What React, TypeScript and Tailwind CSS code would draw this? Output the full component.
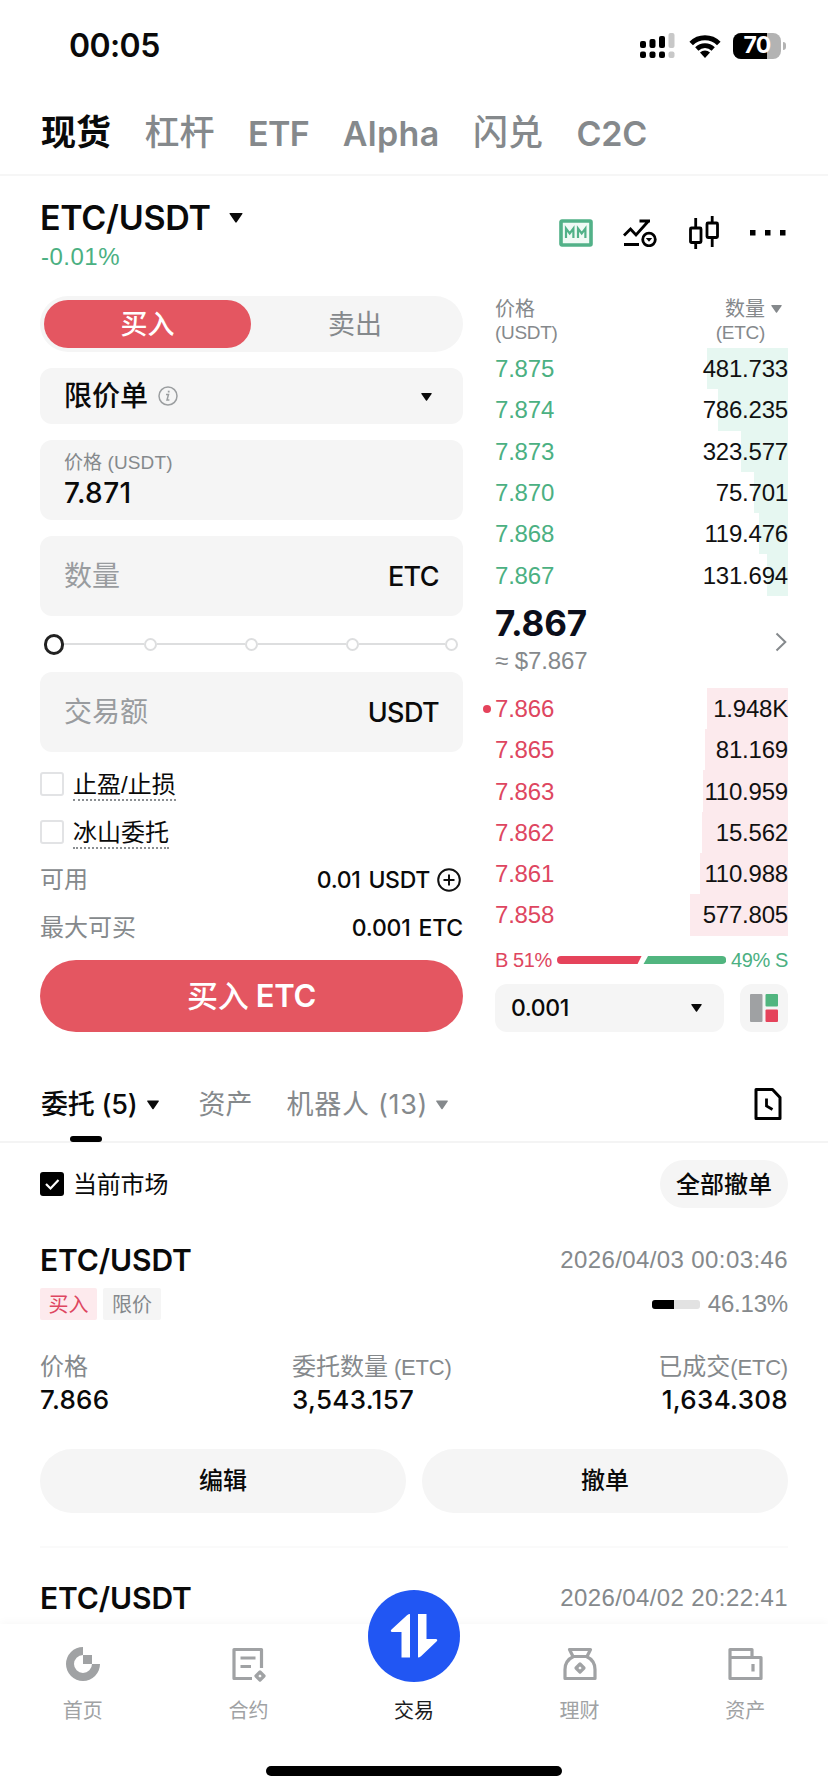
import { type ReactNode } from "react"
import clsx from "clsx"

type Row = { price: string; amount: string; width: number; mine?: boolean }

const topTabs = [
    { label: "现货", active: true },
    { label: "杠杆" },
    { label: "ETF", latin: "tracking-[-0.6px]" },
    { label: "Alpha", latin: "tracking-[0.3px]" },
    { label: "闪兑" },
    { label: "C2C", latin: "tracking-[-0.2px]" },
]

const upper: Row[] = [
    { price: "7.875", amount: "481.733", width: 81 },
    { price: "7.874", amount: "786.235", width: 70 },
    { price: "7.873", amount: "323.577", width: 47 },
    { price: "7.870", amount: "75.701", width: 34 },
    { price: "7.868", amount: "119.476", width: 29 },
    { price: "7.867", amount: "131.694", width: 21 },
]

const lower: Row[] = [
    { price: "7.866", amount: "1.948K", width: 81, mine: true },
    { price: "7.865", amount: "81.169", width: 83 },
    { price: "7.863", amount: "110.959", width: 85 },
    { price: "7.862", amount: "15.562", width: 86 },
    { price: "7.861", amount: "110.988", width: 88 },
    { price: "7.858", amount: "577.805", width: 98 },
]

const sans = "font-['Liberation_Sans','Noto_Sans_CJK_SC',sans-serif]"
const inter = "font-['Inter','Noto_Sans_CJK_SC',sans-serif]"

const Caret = ({ className }: { className?: string }) => (
    <svg viewBox="0 0 12 9" className={clsx("shrink-0 fill-current", className)}>
        <path d="M0.6 0h10.8q0.8 0.3 0.3 1L6.6 8.4q-0.6 0.7-1.2 0L0.3 1Q-0.2 0.3 0.6 0z" />
    </svg>
)

/* Status bar */
const StatusBar = () => (
    <div className="flex h-[88px] shrink-0 items-center justify-between pl-[69px] pr-[42px] pt-[3px]">
        <span className={clsx(inter, "text-[32px] font-semibold tracking-[-0.6px]")}>00:05</span>
        <div className="flex items-center">
            <svg viewBox="0 0 36 26" className="h-[26px] w-9">
                <g fill="#000">
                    <rect x="0" y="8" width="6" height="7" rx="2" />
                    <rect x="9.5" y="6" width="6" height="9" rx="2" />
                    <rect x="19" y="3" width="6" height="12" rx="2" />
                    <rect x="0" y="18.500" width="6" height="6.500" rx="2" />
                    <rect x="9.5" y="18.500" width="6" height="6.500" rx="2" />
                    <rect x="19" y="18.500" width="6" height="6.500" rx="2" />
                </g>
                <g fill="#c8c8c8">
                    <rect x="28.500" y="0" width="6" height="15" rx="2" />
                    <rect x="28.500" y="18.500" width="6" height="6.500" rx="2" />
                </g>
            </svg>
            <svg viewBox="0 0 32 24" className="ml-[13px] h-6 w-8">
                <path d="M2.200 9.500a19.500 19.500 0 0 1 27.600 0" fill="none" stroke="#000" strokeWidth="5" />
                <path d="M7.800 15a11.600 11.600 0 0 1 16.400 0" fill="none" stroke="#000" strokeWidth="4.600" />
                <path d="M11 18.600a7.200 7.200 0 0 1 10 0L16 24z" fill="#000" />
            </svg>
            <div className="relative ml-[12px] h-[26px] w-12 overflow-hidden rounded-[8px] bg-[#b3b3b3]">
                <div className="h-full w-[34px] bg-black" />
                <span className={clsx(inter, "absolute inset-0 flex items-center justify-center text-[23px] font-bold tracking-[-0.8px] text-white")}>70</span>
            </div>
            <div className="ml-[2px] h-2 w-[3px] rounded-r-full bg-[#b3b3b3]" />
        </div>
    </div>
)

const BookRow = ({ row, buy }: { row: Row; buy?: boolean }) => (
    <div className={clsx(sans, "relative flex h-[41.3px] items-center justify-between pt-px text-[24px]")}>
        <div className={clsx("absolute right-0 top-0 h-full", buy ? "bg-[#fceaed]" : "bg-[#e6f7f1]")} style={{ width: row.width }} />
        {row.mine && <i className="absolute -left-[12px] top-[17px] size-2 rounded-full bg-[#e5435b]" />}
        <span className={clsx("relative tracking-[-0.2px]", buy ? "text-[#de4660]" : "text-[#4bb082]")}>{row.price}</span>
        <span className="relative tracking-[-0.2px] text-[#111]">{row.amount}</span>
    </div>
)

const Field = ({ label, unit }: { label: string; unit: string }) => (
    <div className="flex h-20 items-center justify-between rounded-[12px] bg-[#f5f5f5] px-6 pt-[2px]">
        <span className="text-[28px] text-[#999c9f]">{label}</span>
        <span className={clsx(inter, "text-[27px] font-medium tracking-[-0.6px]")}>{unit}</span>
    </div>
)

const CheckLine = ({ label }: { label: string }) => (
    <div className="flex h-12 items-center gap-[9px]">
        <span className="size-6 rounded-[3px] border-2 border-[#e2e3e5]" />
        <span className="mt-1 border-b-2 border-dotted border-[#8b8f92] text-[24px] leading-[28px]">{label}</span>
    </div>
)

const OrderForm = () => (
    <div className="w-[423px]">
        <div className="flex h-14 rounded-full bg-[#f5f5f5] p-1 text-[27px]">
            <div className="flex w-[207px] items-center justify-center rounded-full bg-[#e45661] pt-[2px] font-medium text-white">买入</div>
            <div className="flex flex-1 items-center justify-center pt-[2px] text-[#85898c]">卖出</div>
        </div>

        <div className="mt-4 flex h-14 items-center rounded-[12px] bg-[#f5f5f5] px-6">
            <span className="pt-[2px] text-[28px] font-medium">限价单</span>
            <svg viewBox="0 0 20 20" className="ml-[10px] size-5" fill="none" stroke="#9b9ea0" strokeWidth="1.5">
                <circle cx="10" cy="10" r="9" />
                <path d="M8 8.500h2.500L9 14h2.400" />
                <path d="M10.700 4.700v1.800" strokeWidth="1.800" />
            </svg>
            <Caret className="ml-auto mr-[7px] mt-[2px] h-[8px] w-[11px]" />
        </div>

        <div className="mt-4 flex h-20 flex-col justify-center rounded-[12px] bg-[#f5f5f5] px-6">
            <span className="text-[19px] leading-[26px] tracking-[0.1px] text-[#85898c]">价格 (USDT)</span>
            <span className={clsx(inter, "text-[28px] font-medium leading-[35px] tracking-[0.4px]")}>7.871</span>
        </div>

        <div className="mt-4">
            <Field label="数量" unit="ETC" />
        </div>

        {/* Amount slider */}
        <div className="flex h-14 items-center pl-1 pr-[5px]">
            <span className="size-[21px] rounded-full border-[3px] border-[#222]" />
            {[80, 88, 88, 86].map((w, i) => (
                <div key={i} className="flex items-center">
                    <span className="h-[2px] bg-[#dddedf]" style={{ width: w }} />
                    <span className="size-[13px] rounded-full border-2 border-[#dddedf] bg-white" />
                </div>
            ))}
        </div>

        <Field label="交易额" unit="USDT" />

        <div className="mt-2">
            <CheckLine label="止盈/止损" />
            <CheckLine label="冰山委托" />
            <div className="flex h-12 items-center justify-between text-[24px]">
                <span className="text-[#85898c]">可用</span>
                <span className={clsx(inter, "flex items-center gap-[7px] text-[23px] font-medium tracking-[-0.3px] [word-spacing:2px]")}>
                    0.01 USDT
                    <svg viewBox="0 0 24 24" className="mr-[2px] size-6" fill="none" stroke="#111" strokeWidth="2">
                        <circle cx="12" cy="12" r="10.800" />
                        <path d="M12 6.500v11M6.500 12h11" />
                    </svg>
                </span>
            </div>
            <div className="flex h-12 items-center justify-between text-[24px]">
                <span className="text-[#85898c]">最大可买</span>
                <span className={clsx(inter, "text-[23px] font-medium tracking-[-0.2px] [word-spacing:2px]")}>0.001 ETC</span>
            </div>
        </div>

        <div className={clsx(inter, "mt-2 flex h-[72px] items-center justify-center rounded-full bg-[#e45661] pt-px text-[31px] font-semibold tracking-[-0.3px] text-white")}>
            <span className="font-medium">买入</span>&nbsp;ETC
        </div>
    </div>
)

const OrderBook = () => (
    <div className="w-[293px]">
        <div className="flex h-[52px] justify-between pt-px text-[20px] leading-6 text-[#85898c]">
            <div>
                <p>价格</p>
                <p className="text-[19px] tracking-[-0.3px]">(USDT)</p>
            </div>
            <div className="flex gap-[6px]">
                <div className="text-right">
                    <p>数量</p>
                    <p className="text-[19px] tracking-[-0.3px]">(ETC)</p>
                </div>
                <Caret className="mr-[6px] mt-[8px] h-[8px] w-[11px]" />
            </div>
        </div>

        {upper.map((row) => <BookRow key={row.price} row={row} />)}

        <div className="flex h-[92px] items-center justify-between">
            <div className="pb-[2px]">
                <p className={clsx(inter, "text-[35px] font-bold leading-[36px] tracking-[-0.1px] text-[#0b0e1a]")}>7.867</p>
                <p className={clsx(sans, "mt-[4px] text-[24px] leading-[32px] tracking-[-0.1px] text-[#85898c]")}>≈ $7.867</p>
            </div>
            <svg viewBox="0 0 12 20" className="mr-[1px] h-5 w-3" fill="none" stroke="#85898c" strokeWidth="2">
                <path d="M1.500 1.500L10.300 10l-8.800 8.500" />
            </svg>
        </div>

        {lower.map((row) => <BookRow key={row.price} row={row} buy />)}

        {/* Buy / sell ratio */}
        <div className={clsx(sans, "flex h-12 items-center text-[20px] tracking-[-0.4px]")}>
            <span className="text-[#de4660]">B 51%</span>
            <svg viewBox="0 0 170 8" className="mx-[5px] h-2 min-w-0 flex-1" preserveAspectRatio="none">
                <path d="M4 0h81l-4 8H4a4 4 0 0 1 0-8z" fill="#e5435b" />
                <path d="M91.500 0H166a4 4 0 0 1 0 8H87z" fill="#51b57f" />
            </svg>
            <span className="text-[#4bb082]">49% S</span>
        </div>

        <div className="flex justify-between">
            <div className="flex h-12 w-[229px] items-center justify-between rounded-[12px] bg-[#f5f5f5] pl-4 pr-[22px] pt-px">
                <span className={clsx(inter, "text-[23px] font-medium tracking-[-0.4px]")}>0.001</span>
                <Caret className="h-[8px] w-[11px]" />
            </div>
            <div className="flex size-12 items-center justify-center rounded-[12px] bg-[#f5f5f5]">
                <svg viewBox="0 0 28 28" className="size-7">
                    <rect width="12.500" height="28" rx="1" fill="#9fa1a3" />
                    <rect x="15.500" width="12.500" height="12.500" rx="1" fill="#51b57f" />
                    <rect x="15.500" y="15.500" width="12.500" height="12.500" rx="1" fill="#e5435b" />
                </svg>
            </div>
        </div>
    </div>
)

const OrderHead = ({ time }: { time: string }) => (
    <div className="flex h-10 items-center justify-between">
        <span className={clsx(inter, "text-[30px] font-semibold tracking-[-0.1px]")}>ETC/USDT</span>
        <span className={clsx(sans, "text-[24px] tracking-[0.4px] text-[#85898c]")}>{time}</span>
    </div>
)

const Stat = ({ label, unit, value, className }: { label: string; unit?: string; value: string; className?: string }) => (
    <div className={className}>
        <p className="h-[34px]">{label}{unit && <span className="text-[22px] tracking-[-0.2px]">{unit}</span>}</p>
        <p className={clsx(inter, "text-[26px] font-medium leading-[32px] tracking-[0.3px] text-[#0a0a0a]")}>{value}</p>
    </div>
)

const NavItem = ({ label, children }: { label: string; children: ReactNode }) => (
    <div className="flex flex-1 flex-col items-center pt-[22px] text-[#a0a2a4]">
        <svg viewBox="0 0 36 36" className="size-9" fill="none" stroke="currentColor" strokeWidth="3.2" strokeLinejoin="round">
            {children}
        </svg>
        <span className="mt-[15px] text-[20px] leading-7">{label}</span>
    </div>
)

export default function App() {
    return (
        <main className={clsx(sans, "flex h-[1792px] w-[828px] flex-col overflow-hidden bg-white text-[#0a0a0a]")}>
            <StatusBar />

            <nav className="flex h-[88px] shrink-0 items-center gap-[33.5px] border-b-2 border-[#f6f6f6] pl-[41px] pr-10 pt-[4px] text-[35px]">
                {topTabs.map((t) => (
                    <span
                        key={t.label}
                        className={clsx(t.active ? "font-bold" : "font-medium text-[#85898c]", t.latin && [inter, "text-[34px] font-semibold", t.latin])}
                    >
                        {t.label}
                    </span>
                ))}
            </nav>

            {/* Pair header */}
            <header className="flex h-[120px] shrink-0 justify-between px-10 pt-5">
                <div>
                    <div className="flex items-center gap-[18px]">
                        <h1 className={clsx(inter, "text-[34px] font-semibold leading-[43px] tracking-[-0.3px]")}>ETC/USDT</h1>
                        <Caret className="h-[10px] w-[14px]" />
                    </div>
                    <p className="pl-px text-[24px] leading-[36px] tracking-[0.5px] text-[#4bb082]">-0.01%</p>
                </div>
                <div className="flex h-[73px] items-center">
                    <svg viewBox="0 0 34 28" className="h-7 w-[34px]" fill="none" stroke="#52b188">
                        <rect x="2" y="2" width="30" height="24" rx="1" strokeWidth="3.6" fill="#f0faf5" />
                        <path d="M7 19V9.500l3.700 5 3.700-5V19M19 19V9.500l3.700 5 3.700-5V19" strokeWidth="2.200" />
                    </svg>
                    <svg viewBox="0 0 34 28" className="ml-[30px] h-7 w-[34px]" fill="none" stroke="#000" strokeWidth="2.800">
                        <path d="M1 16.500l6.500-6.500 5.500 6L25.500 2M16.500 2H27M1 25.500h15" />
                        <circle cx="26" cy="20.500" r="6.300" />
                        <path d="M22.800 19h6.400L26 22.800z" fill="#000" stroke="none" />
                    </svg>
                    <svg viewBox="0 0 30 34" className="ml-8 h-[34px] w-[30px]" fill="none" stroke="#000" strokeWidth="2.800">
                        <rect x="1.500" y="12" width="10.500" height="14.500" rx="1" />
                        <path d="M6.700 2v10M6.700 26.500V33" />
                        <rect x="18" y="7" width="10.500" height="14.500" rx="1" />
                        <path d="M23.200 0v7M23.200 21.500V31" />
                    </svg>
                    <svg viewBox="0 0 36 6" className="ml-[31px] mr-[2px] h-[6px] w-9">
                        <rect width="5.500" height="5.500" />
                        <rect x="15" width="5.500" height="5.500" />
                        <rect x="30" width="5.500" height="5.500" />
                    </svg>
                </div>
            </header>

            <section className="flex shrink-0 justify-between px-10">
                <OrderForm />
                <OrderBook />
            </section>

            {/* Orders */}
            <nav className="mt-9 flex h-[75px] shrink-0 items-start justify-between border-b-2 border-[#f4f4f4] px-10 pt-[17px]">
                <div className="flex text-[27px] leading-10 text-[#85898c]">
                    <div className="relative flex items-center pl-px text-[#0a0a0a]">
                        <span className={clsx(inter, "font-medium tracking-[-0.2px]")}>委托 (5)</span>
                        <Caret className="ml-[9px] h-[10px] w-3" />
                        <i className="absolute left-[30px] top-[51px] h-[6px] w-8 rounded-full bg-black" />
                    </div>
                    <span className="ml-[40px]">资产</span>
                    <div className="ml-[34px] flex items-center">
                        <span className={clsx(inter, "tracking-[0.7px]")}>机器人 (13)</span>
                        <Caret className="ml-[8px] h-[10px] w-3" />
                    </div>
                </div>
                <svg viewBox="0 0 28 32" className="mr-[6px] mt-[3px] h-8 w-7" fill="none" stroke="#000" strokeWidth="3">
                    <path d="M2 1.500h16.500l7.500 8v21H2z" strokeLinejoin="round" />
                    <path d="M12.500 10.500V18l6 3.500" strokeWidth="2.800" />
                </svg>
            </nav>

            <section className="shrink-0 px-10">
                <div className="mt-[17px] flex h-12 items-center justify-between text-[24px]">
                    <div className="flex items-center gap-[9px]">
                        <svg viewBox="0 0 24 24" className="size-6">
                            <rect width="24" height="24" rx="3" />
                            <path d="M6 12l4.500 4.500L18.500 8" fill="none" stroke="#fff" strokeWidth="2.200" />
                        </svg>
                        <span className="pt-px tracking-[-0.2px]">当前市场</span>
                    </div>
                    <span className="flex h-12 items-center rounded-full bg-[#f5f5f5] px-4 pt-px font-medium">全部撤单</span>
                </div>

                <div className="mt-[32px]">
                    <OrderHead time="2026/04/03 00:03:46" />
                    <div className="mt-2 flex h-8 items-center text-[20px]">
                        <span className="flex h-8 w-[57px] items-center justify-center rounded-[2px] bg-[#fdeaed] pt-px text-[#de4660]">买入</span>
                        <span className="ml-[6px] flex h-8 w-[58px] items-center justify-center rounded-[2px] bg-[#f5f5f5] pt-px text-[#85898c]">限价</span>
                        <div className="ml-auto flex h-[9px] w-12 overflow-hidden rounded-[3px] bg-[#e2e2e2]">
                            <div className="w-[22px] bg-black" />
                        </div>
                        <span className="ml-[8px] text-[24px] tracking-[-0.2px] text-[#85898c]">46.13%</span>
                    </div>

                    <div className="mt-[30px] flex justify-between text-[24px] leading-[34px] text-[#85898c]">
                        <Stat className="w-[252px]" label="价格" value="7.866" />
                        <Stat className="flex-1" label="委托数量" unit=" (ETC)" value="3,543.157" />
                        <Stat className="text-right" label="已成交" unit="(ETC)" value="1,634.308" />
                    </div>

                    <div className="mt-[33px] flex gap-4 text-[24px] font-medium">
                        <span className="flex h-16 flex-1 items-center justify-center rounded-full bg-[#f5f5f5]">编辑</span>
                        <span className="flex h-16 flex-1 items-center justify-center rounded-full bg-[#f5f5f5]">撤单</span>
                    </div>
                </div>

                <div className="mt-[33px] border-t-2 border-[#fafafa] pt-[30px]">
                    <OrderHead time="2026/04/02 20:22:41" />
                </div>
            </section>

            {/* Bottom navigation */}
            <footer className="mt-auto flex h-[168px] shrink-0 flex-col bg-white shadow-[0_-2px_8px_rgba(0,0,0,0.03)]">
                <div className="flex">
                    <NavItem label="首页">
                        <g fill="currentColor" stroke="none">
                            <path d="M18 1A17 17 0 1 0 35 18H27A9 9 0 1 1 18 9z" />
                            <path d="M18 9h9v9h-9z" />
                        </g>
                    </NavItem>
                    <NavItem label="合约">
                        <path d="M22 32.500H4v-29h27.500V22" />
                        <path d="M10.500 12h15M10.500 20.500h10.500" />
                        <path d="M30 26l4 4-4 4-4-4z" />
                    </NavItem>
                    <div className="relative flex flex-1 flex-col items-center pt-[73px]">
                        <div className="absolute -top-[34px] flex size-[92px] items-center justify-center rounded-full bg-[#2156f3]">
                            <svg viewBox="0 0 48 44" className="h-11 w-12" fill="#fff">
                                <path d="M20 0v43.500h-8.500V18H2.500Q-0.500 18 1.500 15.500L17 1.200Q18.500 0 20 0z" />
                                <path d="M28 43.500V0h8.500v25h9Q48.500 25 46.500 27.500L31 42.300Q29.500 43.500 28 43.500z" />
                            </svg>
                        </div>
                        <span className="text-[20px] leading-7 text-[#1c1c1e]">交易</span>
                    </div>
                    <NavItem label="理财">
                        <path d="M7.500 3.500h21l-3.500 7H11z" />
                        <path d="M11.500 10.500h13q8.500 4 8.500 13v9H3v-9q0-9 8.500-13z" />
                        <path d="M18 18l4 4-4 4-4-4z" />
                    </NavItem>
                    <NavItem label="资产">
                        <path d="M3 11.500h31v21H3v-29h22v8" />
                        <path d="M26 18v7.500" />
                    </NavItem>
                </div>
                <div className="mx-auto mb-4 mt-auto h-[10px] w-[296px] rounded-full bg-black" />
            </footer>
        </main>
    )
}
